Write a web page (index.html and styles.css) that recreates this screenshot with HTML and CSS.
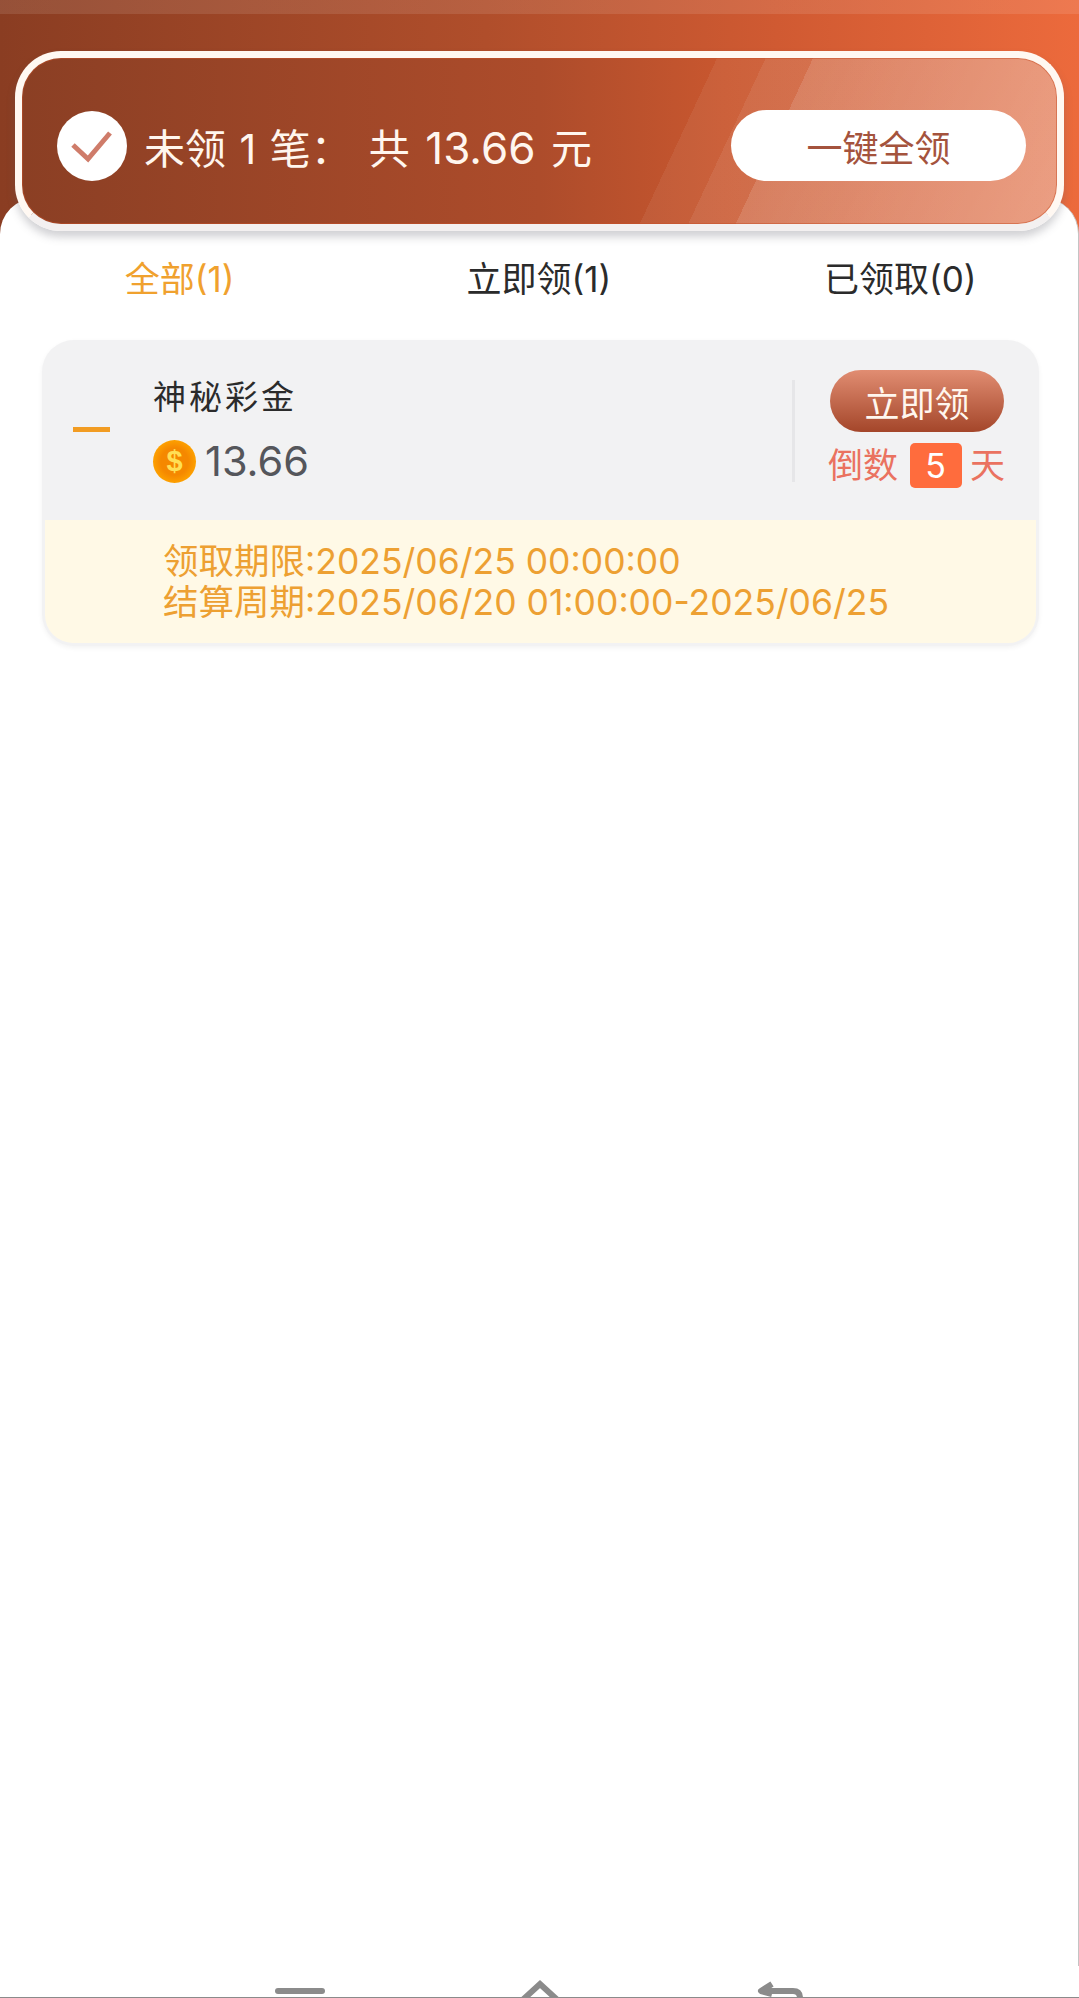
FILE: index.html
```html
<!DOCTYPE html>
<html lang="zh-CN">
<head>
    <meta charset="UTF-8">
    <meta name="viewport" content="width=device-width, initial-scale=1.0">
    <title>神秘彩金</title>
    <link rel="stylesheet" href="styles.css">
</head>
<body>
    <div class="page">
        <div class="hero">
            <div class="banner">
                <div class="banner-info">
                    <svg class="check" viewBox="0 0 70 70">
                        <circle cx="35" cy="35" r="35" fill="#fff"/>
                        <path d="M16 34 L31 48 L53 22" fill="none" stroke="#cf7c6a" stroke-width="5"/>
                    </svg>
                    <span class="banner-text">未领 1 笔：<span class="banner-total">共 <span class="banner-num">13.66</span> 元</span></span>
                </div>
                <button class="claim-all">一键全领</button>
            </div>
        </div>

        <div class="sheet">
            <div class="tabs">
                <div class="tab active">全部(1)</div>
                <div class="tab">立即领(1)</div>
                <div class="tab last">已领取(0)</div>
            </div>

            <div class="card">
                <div class="card-main">
                    <div class="dash"></div>
                    <div class="reward">
                        <div class="reward-name">神秘彩金</div>
                        <div class="reward-amount">
                            <span class="coin">$</span>
                            <span>13.66</span>
                        </div>
                    </div>
                    <div class="action">
                        <button class="claim">立即领</button>
                        <div class="countdown">倒数<span class="days">5</span>天</div>
                    </div>
                </div>
                <div class="card-note">
                    <div>领取期限:2025/06/25 00:00:00</div>
                    <div>结算周期:2025/06/20 01:00:00-2025/06/25</div>
                </div>
            </div>
        </div>

        <div class="navbar">
            <svg class="nav-icon" viewBox="0 0 600 32">
                <path d="M38 25 H82" stroke="#8b8b8b" stroke-width="6" stroke-linecap="round" fill="none"/>
                <path d="M276 40 L300 18 L324 40" stroke="#8b8b8b" stroke-width="6" fill="none"/>
                <path d="M522 25 H553 Q560 25 560 32 V40 M532 18 L521 25 L532 28" stroke="#8b8b8b" stroke-width="6" stroke-linejoin="round" fill="none"/>
            </svg>
        </div>
    </div>
</body>
</html>
```

FILE: styles.css
```css
* {
    box-sizing: border-box;
}
html, body {
    margin: 0;
    padding: 0;
    background-color: #fff;
}
body {
    font-family: Inter, "Noto Sans CJK SC", sans-serif;
    color: #2b2b2b;
}
button {
    font-family: inherit;
    border: none;
    padding: 0;
}
.page {
    width: 1079px;
    height: 1998px;
    overflow: hidden;
    display: flex;
    flex-direction: column;
    background:
        linear-gradient(rgba(255, 255, 255, 0.1) 14px, transparent 14px) no-repeat,
        linear-gradient(90deg, #8a3d22 0%, #b04e2b 45%, #d05a32 72%, #ec6a3c 100%) no-repeat;
    background-size: 100% 260px;
}
.hero {
    height: 198px;
    padding: 51px 15px 0;
}
.banner {
    position: relative;
    z-index: 1;
    height: 180px;
    padding: 9px 31px 0 35px;
    border: 7px solid #fff8f2;
    border-bottom-color: #f3f0f0;
    border-radius: 46px;
    box-shadow: 0 6px 8px rgba(90, 90, 100, 0.28), inset 0 0 0 1px rgba(200, 80, 40, 0.5);
    display: flex;
    align-items: center;
    justify-content: space-between;
    background:
        linear-gradient(115deg, transparent 717px, rgba(255, 255, 255, 0.12) 717px, rgba(255, 255, 255, 0.26) 100%),
        linear-gradient(115deg, transparent 674px, rgba(255, 255, 255, 0.07) 674px),
        linear-gradient(115deg, transparent 630px, rgba(255, 255, 255, 0.06) 630px),
        linear-gradient(90deg, #8b3f24 0%, #ad4c2b 50%, #c9572f 68%, #e06a40 100%);
    background-origin: padding-box;
}
.banner-info {
    display: flex;
    align-items: center;
    gap: 17px;
}
.check {
    width: 70px;
    height: 70px;
}
.banner-text {
    font-size: 41px;
    word-spacing: 2px;
    color: #fff6ee;
}
.banner-total {
    margin-left: 17px;
    word-spacing: 4px;
}
.banner-num {
    font-size: 44px;
}
.claim-all {
    width: 295px;
    height: 71px;
    border-radius: 36px;
    background-color: #fff;
    color: #a4533d;
    font-size: 36px;
}
.sheet {
    flex: 1;
    padding: 0 40px;
    background-color: #fff;
    border-right: 1px solid #c4c4c4;
    border-radius: 36px 36px 0 0;
}
.tabs {
    height: 142px;
    margin: 0 -40px;
    padding: 35px 0 0;
    display: grid;
    grid-template-columns: repeat(3, 1fr);
    text-align: center;
    font-size: 35px;
    line-height: 92px;
    align-items: start;
}
.tab.active {
    color: #f0a12e;
}
.tab.last {
    padding-left: 4px;
}
.card {
    width: 997px;
    height: 306px;
    margin-left: 2px;
    padding: 0 3px 3px;
    border-radius: 32px;
    overflow: hidden;
    background-color: #f2f2f3;
    box-shadow: 0 2px 5px rgba(0, 0, 0, 0.05);
}
.card-main {
    height: 180px;
    padding: 0 31px 0 28px;
    display: flex;
    align-items: center;
}
.dash {
    width: 37px;
    height: 5px;
    margin-top: -2px;
    background-color: #f29c22;
}
.reward {
    margin-left: 43px;
    flex: 1;
    height: 140px;
}
.reward-name {
    margin-top: 15px;
    font-size: 33px;
    letter-spacing: 3px;
    line-height: 44px;
}
.reward-amount {
    margin-top: 18px;
    display: flex;
    align-items: center;
    gap: 9px;
    font-size: 41.5px;
    line-height: 48px;
    color: #55565b;
}
.coin {
    width: 43px;
    height: 43px;
    border-radius: 50%;
    background: radial-gradient(circle, #f58800 45%, #ffa600 76%, #ffd83c 92%);
    color: #ffdf55;
    font-family: "Liberation Sans", sans-serif;
    font-size: 29px;
    font-weight: bold;
    line-height: 43px;
    text-align: center;
}
.action {
    width: 213px;
    height: 102px;
    margin-top: 2px;
    border-left: 3px solid #e6e6e8;
    position: relative;
}
.claim {
    position: absolute;
    top: -10px;
    right: 1px;
    width: 174px;
    height: 62px;
    border-radius: 31px;
    background: linear-gradient(#e18d72, #a4462a);
    color: #fff6ee;
    font-size: 35px;
}
.countdown {
    position: absolute;
    top: 62px;
    right: 0;
    width: 177px;
    display: flex;
    align-items: center;
    justify-content: space-between;
    font-size: 35px;
    line-height: 46px;
    color: #ea7260;
}
.days {
    width: 52px;
    height: 45px;
    margin-left: 3px;
    border-radius: 5px;
    background-color: #ff6c3d;
    color: #fff;
    font-size: 34px;
    line-height: 45px;
    text-align: center;
}
.card-note {
    height: 123px;
    padding: 21px 0 0 118px;
    border-radius: 0 0 28px 28px;
    background-color: #fff9e6;
    color: #eda032;
    font-size: 35.5px;
    line-height: 41px;
}
.navbar {
    height: 32px;
    border-bottom: 1px solid #8b8b8b;
    overflow: hidden;
    padding-left: 240px;
}
.nav-icon {
    display: block;
    width: 600px;
    height: 32px;
}
```
